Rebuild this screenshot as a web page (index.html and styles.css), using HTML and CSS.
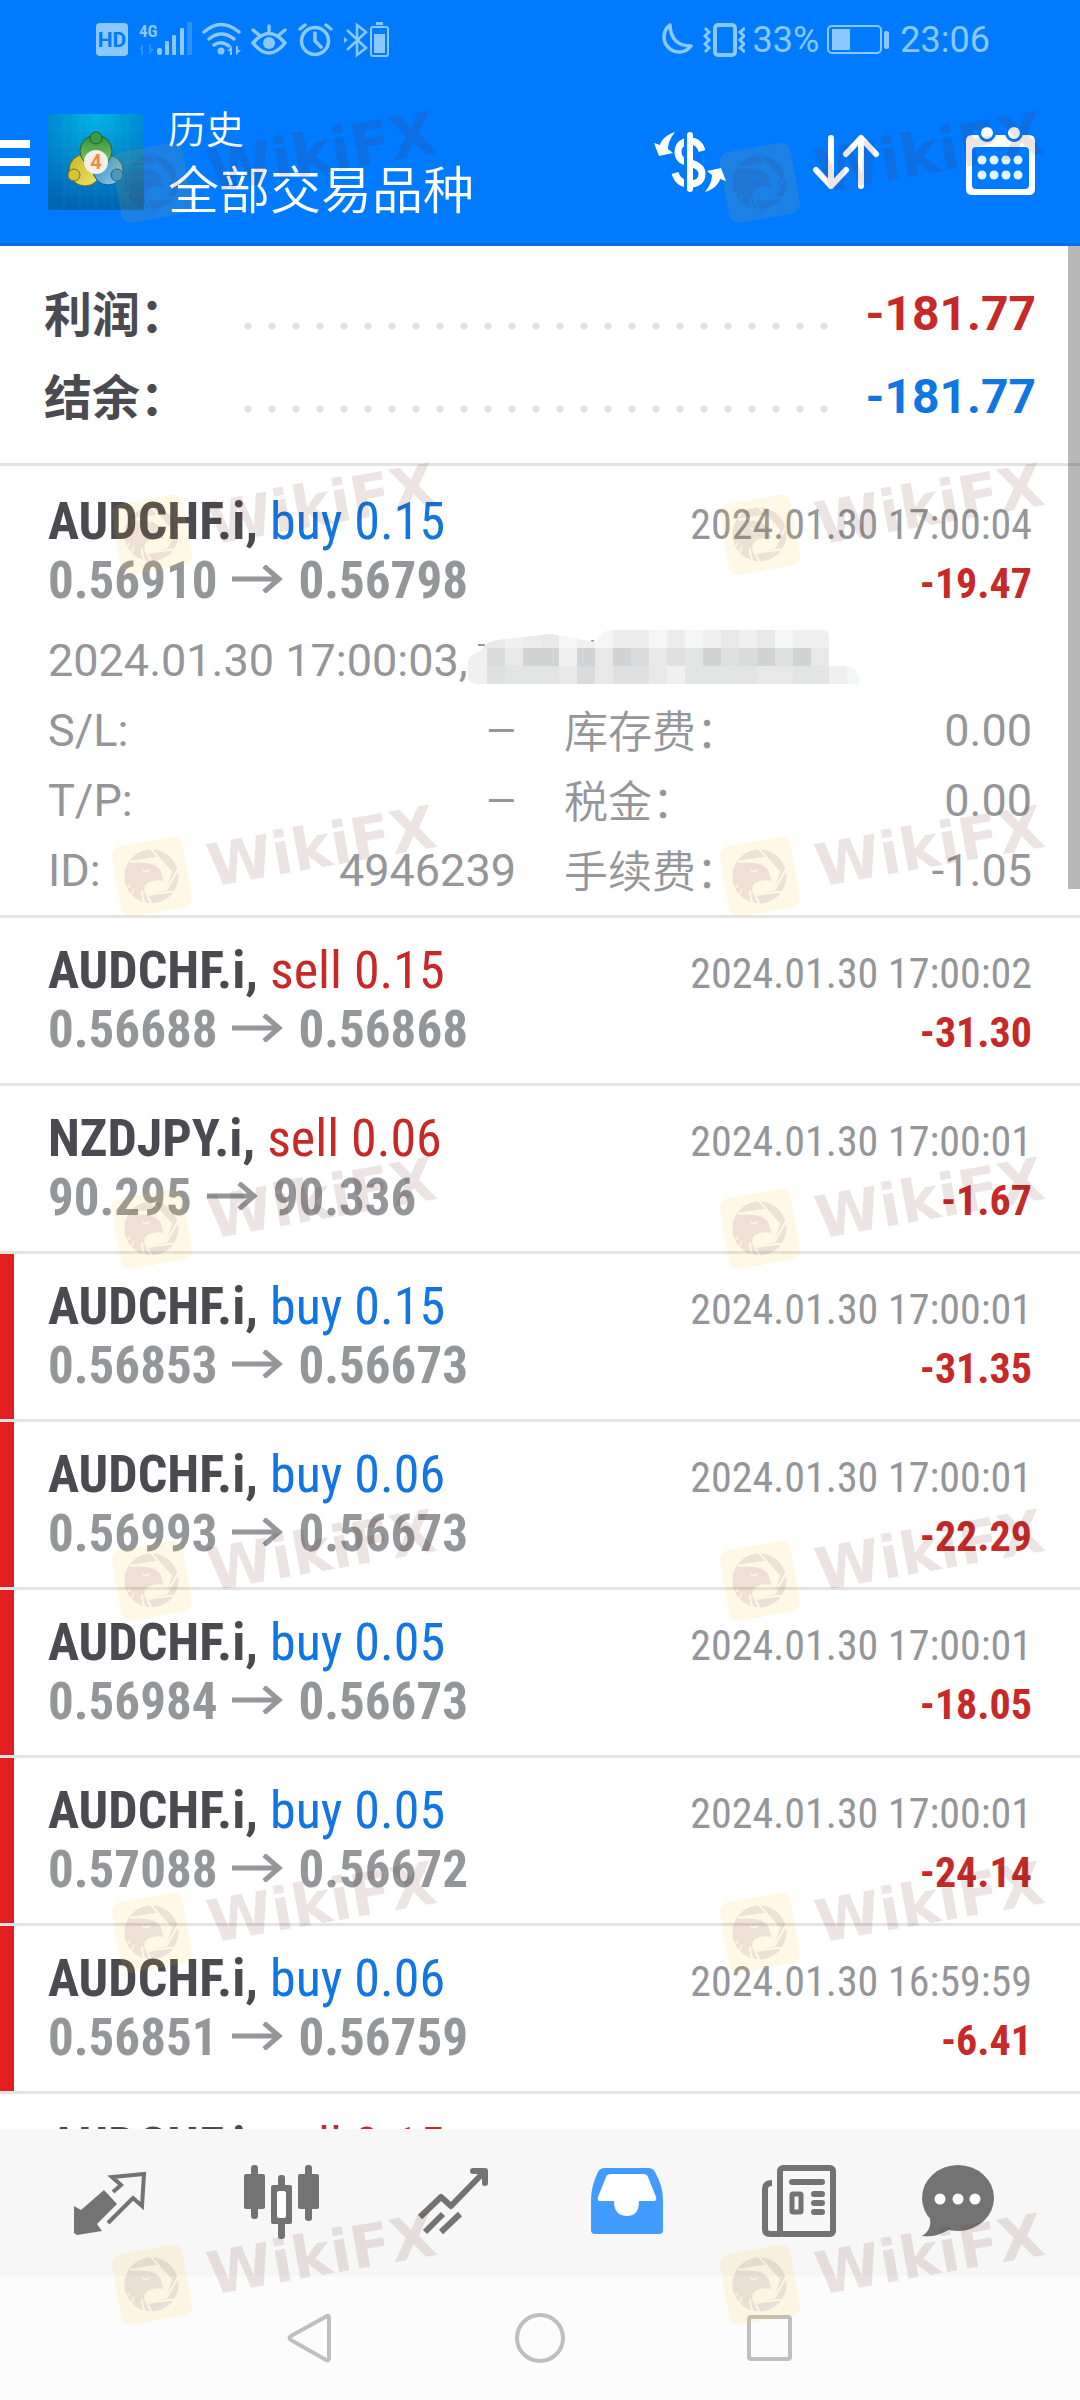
FILE: index.html
```html
<!DOCTYPE html>
<html lang="zh-CN">
<head>
<meta charset="utf-8">
<meta name="viewport" content="width=device-width, initial-scale=1">
<title>历史</title>
<link rel="stylesheet" href="styles.css">
</head>
<body>
<svg class="defs" aria-hidden="true">
  <defs>
    <mask id="eagle-cut" maskUnits="userSpaceOnUse" x="0" y="0" width="72" height="72">
      <rect width="72" height="72" fill="#fff"/>
      <path d="M41 16 56 30 51 49 34 55 29 51Q27 46 32 42 38 38 48 40L46 36Q46 28 38 24 31 21 18 22L15 20 39 17Z" fill="#000"/>
      <path d="M34 7 56 32M64 25 49 52M31 54 64 50M14 21 42 17M29 50 36 64M26 50Q26 57 29 63" fill="none" stroke="#000" stroke-width="2"/>
      <path d="M26 29Q31 32 34 29M14 44 10 50M18 48 15 56" fill="none" stroke="#000" stroke-width="1.5"/>
    </mask>
    <symbol id="eagle" viewBox="0 0 72 72">
      <rect width="72" height="72" rx="10" fill="#fabe10" fill-opacity=".11"/>
      <g transform="rotate(10 36 36)"><circle cx="35.500" cy="35.500" r="27" fill="#581e50" fill-opacity=".1" mask="url(#eagle-cut)"/></g>
    </symbol>
    <symbol id="arrow" viewBox="0 0 51 28"><path d="M0 14H46M32 1 47 14 32 27" fill="none" stroke="currentColor" stroke-width="5"/></symbol>
  </defs>
</svg>

<div class="app">
  <div class="status">
    <div class="status-side">
      <svg width="32" height="40" viewBox="96 20 32 40"><rect x="96" y="23" width="32" height="33" rx="4" fill="currentColor"/><text x="112" y="47" text-anchor="middle" class="hd">HD</text></svg>
      <svg width="54" height="40" viewBox="138 20 54 40"><text x="139" y="37" class="g4">4G</text><g fill="currentColor"><rect x="157" y="48" width="5" height="7" rx="2"/><rect x="165" y="41" width="4" height="14" rx="1"/><rect x="172" y="35" width="4" height="20" rx="1"/><rect x="180" y="28" width="4" height="27" rx="1"/><path opacity=".3" d="M187 22H192V55H187ZM139 49 143 44V55H141V49ZM154 49 149 55V44H151V49Z"/></g></svg>
      <svg width="39" height="40" viewBox="202 20 39 40"><g fill="none" stroke="currentColor" stroke-width="3.500" stroke-linecap="round"><path d="M204 32Q221 17 239 32M209 39Q221 29 234 39M214 45Q221 40 229 46"/></g><circle cx="221" cy="51" r="3.500" fill="currentColor"/><path d="M227 51 232 46V55H230V51ZM241 50 236 55V46H238V50Z" fill="currentColor"/></svg>
      <svg width="36" height="40" viewBox="251 20 36 40"><path d="M253 43Q269 24 285 43 269 63 253 43ZM269 31V26M259 35 253 30M279 35 285 30" fill="none" stroke="currentColor" stroke-width="3.500" stroke-linecap="round"/><circle cx="269" cy="43" r="6" fill="currentColor"/></svg>
      <svg width="36" height="40" viewBox="297 20 36 40"><g fill="none" stroke="currentColor" stroke-width="3.500" stroke-linecap="round"><circle cx="315" cy="41" r="13.500"/><path d="M315 33V41L321 47M300 29 305 25M331 29 326 25"/></g></svg>
      <svg width="46" height="40" viewBox="343 20 46 40"><path d="M347 30 366 48 357 55V25L366 32 347 50" fill="none" stroke="currentColor" stroke-width="2.500"/><path d="M344 37 348 40 344 43Z" fill="currentColor"/><rect x="371" y="27" width="17" height="29" rx="2" fill="none" stroke="currentColor" stroke-width="2"/><path d="M374 34H385V53H374ZM376 22H383V25H376Z" fill="currentColor"/></svg>
    </div>
    <div class="status-side status-text">
      <svg width="36" height="40" viewBox="661 20 36 40"><path d="M672 25A15 15 0 1 0 693 46Q673 46 672 25Z" fill="none" stroke="currentColor" stroke-width="3.500" stroke-linejoin="round"/></svg>
      <svg width="42" height="40" viewBox="705 20 42 40"><rect x="717" y="25" width="20" height="30" rx="3" fill="none" stroke="currentColor" stroke-width="4"/><path d="M707 28 711 32 707 36 711 40 707 44 711 48 707 52M747 28 742 32 746 36 742 40 746 44 742 48 747 52" fill="none" stroke="currentColor" stroke-width="3"/></svg>
      <span>33%</span>
      <svg width="65" height="40" viewBox="829 20 65 40"><rect x="830" y="26" width="53" height="27" rx="4" fill="none" stroke="currentColor" stroke-width="2"/><path d="M834 29H852V50H834Z" fill="currentColor"/><rect x="886" y="31" width="5" height="18" rx="2" fill="currentColor"/></svg>
      <span>23:06</span>
    </div>
  </div>

  <header class="bar">
    <button class="icon-btn menu" aria-label="菜单"><svg width="30" height="48" viewBox="0 0 30 48" fill="#fff"><path d="M0 2H30V10H0ZM0 20H30V28H0ZM0 38H30V46H0Z"/></svg></button>
    <svg class="logo" width="96" height="96" viewBox="0 0 96 96" aria-hidden="true">
      <defs>
        <radialGradient id="lg-bg" cx=".5" cy="0" r="1"><stop offset="0" stop-color="#00b4e8"/><stop offset=".55" stop-color="#0086cd"/><stop offset="1" stop-color="#0064b4"/></radialGradient>
        <linearGradient id="lg-g" x2="0" y2="1"><stop stop-color="#2f8f3c"/><stop offset="1" stop-color="#8fcb6a"/></linearGradient>
        <linearGradient id="lg-y" x2="1" y2="1"><stop stop-color="#c5b92a"/><stop offset="1" stop-color="#f2e26b"/></linearGradient>
        <linearGradient id="lg-b" x2="1" y2="1"><stop stop-color="#2f86bd"/><stop offset="1" stop-color="#8fd0ee"/></linearGradient>
      </defs>
      <rect width="96" height="96" fill="url(#lg-bg)"/>
      <path d="M16 0V96M32 0V96M48 0V96M64 0V96M80 0V96M0 16H96M0 32H96M0 48H96M0 64H96M0 80H96" stroke="#fff" stroke-opacity=".06"/>
      <circle cx="37" cy="56" r="16" fill="url(#lg-y)" stroke="#6f651a"/>
      <circle cx="60" cy="56" r="15" fill="url(#lg-b)" stroke="#1b5a86"/>
      <circle cx="48" cy="37" r="16" fill="url(#lg-g)" stroke="#24632c"/>
      <circle cx="48" cy="24" r="6" fill="#3f9a45" stroke="#1f5c2a"/>
      <circle cx="26" cy="61" r="6" fill="#d6c433" stroke="#7d7018"/>
      <circle cx="69" cy="61" r="6" fill="#3c96cc" stroke="#1b5a86"/>
      <circle cx="48" cy="48" r="12" fill="#f1efe8"/>
      <text x="48" y="55" text-anchor="middle" class="logo-num">4</text>
    </svg>
    <h1 class="titles"><span class="title-small">历史</span><span class="title-main">全部交易品种</span></h1>
    <div class="actions">
      <button class="icon-btn" aria-label="货币"><svg width="72" height="72" viewBox="654 126 72 72"><path d="M702 151C700 144 696 141 690 141 682 141 678 146 678 152 678 160 684 162 690 163 698 165 702 168 702 174 702 181 697 184 690 184 682 184 677 180 675 173" fill="none" stroke="#fff" stroke-width="7"/><path d="M686 130V194" stroke="#007aff" stroke-width="4"/><path d="M690 135V189" stroke="#fff" stroke-width="6" stroke-linecap="round"/><path d="M675 132C667 134 661 140 660 145L654 143 659 156 673 153 668 149C668 143 671 137 675 132ZM705 192C713 190 719 184 720 179L726 181 721 168 707 171 712 175C712 181 709 187 705 192Z" fill="#fff"/></svg></button>
      <button class="icon-btn" aria-label="排序"><svg width="72" height="72" viewBox="810 126 72 72"><path d="M831 138V186M816 170 831 186 846 170M861 186V138M846 154 861 138 876 154" fill="none" stroke="#fff" stroke-width="6" stroke-linecap="round" stroke-linejoin="round"/></svg></button>
      <button class="icon-btn" aria-label="日历"><svg width="72" height="72" viewBox="966 126 72 72"><path fill="#fff" fill-rule="evenodd" d="M972 135H1029Q1035 135 1035 141V189Q1035 195 1029 195H972Q966 195 966 189V141Q966 135 972 135ZM976 147Q972 147 972 151V185Q972 189 976 189H1025Q1029 189 1029 185V151Q1029 147 1025 147Z"/><g fill="#fff" stroke="#007aff" stroke-width="3"><circle cx="987" cy="133" r="7.500"/><circle cx="1014" cy="133" r="7.500"/></g><g fill="#e2f4ff"><circle cx="982" cy="160" r="4.500"/><circle cx="994" cy="160" r="4.500"/><circle cx="1006" cy="160" r="4.500"/><circle cx="1018" cy="160" r="4.500"/><circle cx="982" cy="175" r="4.500"/><circle cx="994" cy="175" r="4.500"/><circle cx="1006" cy="175" r="4.500"/><circle cx="1018" cy="175" r="4.500"/></g></svg></button>
    </div>
  </header>

  <main class="history">
    <section class="summary">
      <div class="sum-row"><span class="sum-label">利润：</span><span class="dots"></span><strong class="sum-value loss">-181.77</strong></div>
      <div class="sum-row"><span class="sum-label">结余：</span><span class="dots"></span><strong class="sum-value buy">-181.77</strong></div>
    </section>

    <article class="deal open">
      <div class="line"><h2 class="name">AUDCHF.i, <span class="buy">buy 0.15</span></h2><time class="time">2024.01.30 17:00:04</time></div>
      <div class="line"><div class="prices">0.56910<svg class="arrow"><use href="#arrow"/></svg>0.56798</div><span class="profit">-19.47</span></div>
      <div class="details">
        <div class="opened"><span>2024.01.30 17:00:03,</span>
          <svg width="394" height="70" viewBox="467 626 394 70" aria-hidden="true">
            <clipPath id="blot"><path d="M464 668Q466 655 478 652L486 643 497 640 550 634 595 642Q600 630 612 630H822Q828 630 828 637V666H844Q858 668 858 684H475Q464 682 464 668Z"/></clipPath>
            <path d="M477 645H484M590 641H593" stroke="#95969a" stroke-width="2"/>
            <g clip-path="url(#blot)">
              <path d="M464 630H858V684H464Z" fill="#f0f0f0"/>
              <g fill="#e8e8e8"><path d="M486 630h18v18h-18zM540 630h18v18h-18zM720 630h18v18h-18zM756 630h18v18h-18zM504 648h18v18h-18zM648 648h18v18h-18zM810 648h18v18h-18zM558 666h18v18h-18zM594 666h18v18h-18zM648 666h18v18h-18zM756 666h36v18h-36zM594 648h18v18h-18z"/></g>
              <g fill="#f5f6f6"><path d="M558 630h18v18h-18zM594 630h18v18h-18zM648 630h18v18h-18zM684 630h18v18h-18zM774 630h18v18h-18zM846 666h18v18h-18z"/></g>
              <g fill="#ececec"><path d="M522 630h18v18h-18zM612 630h36v18h-36zM666 630h18v18h-18z"/></g>
              <g fill="#dadbdd"><path d="M486 648h18v18h-18zM630 648h18v18h-18zM738 648h18v18h-18zM576 666h18v18h-18z"/></g>
              <g fill="#d2d3d5"><path d="M522 648h36v18h-36zM576 648h18v18h-18zM612 648h18v18h-18zM702 648h18v18h-18zM756 648h18v18h-18zM792 648h18v18h-18z"/></g>
              <g fill="#dfe0e2"><path d="M666 648h18v18h-18zM720 648h18v18h-18zM774 648h18v18h-18zM486 666h18v18h-18zM612 666h36v18h-36z"/></g>
              <g fill="#e3e4e4"><path d="M684 648h18v18h-18zM504 666h54v18h-54zM684 666h72v18h-72zM792 666h36v18h-36z"/></g>
            </g>
          </svg>
        </div>
        <dl class="grid">
          <div class="cell"><dt>S/L:</dt><dd class="none">—</dd></div><div class="cell"><dt class="cjk">库存费：</dt><dd>0.00</dd></div>
          <div class="cell"><dt>T/P:</dt><dd class="none">—</dd></div><div class="cell"><dt class="cjk">税金：</dt><dd>0.00</dd></div>
          <div class="cell"><dt>ID:</dt><dd>4946239</dd></div><div class="cell"><dt class="cjk">手续费：</dt><dd>-1.05</dd></div>
        </dl>
      </div>
    </article>

    <article class="deal">
      <div class="line"><h2 class="name">AUDCHF.i, <span class="loss">sell 0.15</span></h2><time class="time">2024.01.30 17:00:02</time></div>
      <div class="line"><div class="prices">0.56688<svg class="arrow"><use href="#arrow"/></svg>0.56868</div><span class="profit">-31.30</span></div>
    </article>
    <article class="deal">
      <div class="line"><h2 class="name">NZDJPY.i, <span class="loss">sell 0.06</span></h2><time class="time">2024.01.30 17:00:01</time></div>
      <div class="line"><div class="prices">90.295<svg class="arrow"><use href="#arrow"/></svg>90.336</div><span class="profit">-1.67</span></div>
    </article>
    <article class="deal stop">
      <div class="line"><h2 class="name">AUDCHF.i, <span class="buy">buy 0.15</span></h2><time class="time">2024.01.30 17:00:01</time></div>
      <div class="line"><div class="prices">0.56853<svg class="arrow"><use href="#arrow"/></svg>0.56673</div><span class="profit">-31.35</span></div>
    </article>
    <article class="deal stop">
      <div class="line"><h2 class="name">AUDCHF.i, <span class="buy">buy 0.06</span></h2><time class="time">2024.01.30 17:00:01</time></div>
      <div class="line"><div class="prices">0.56993<svg class="arrow"><use href="#arrow"/></svg>0.56673</div><span class="profit">-22.29</span></div>
    </article>
    <article class="deal stop">
      <div class="line"><h2 class="name">AUDCHF.i, <span class="buy">buy 0.05</span></h2><time class="time">2024.01.30 17:00:01</time></div>
      <div class="line"><div class="prices">0.56984<svg class="arrow"><use href="#arrow"/></svg>0.56673</div><span class="profit">-18.05</span></div>
    </article>
    <article class="deal stop">
      <div class="line"><h2 class="name">AUDCHF.i, <span class="buy">buy 0.05</span></h2><time class="time">2024.01.30 17:00:01</time></div>
      <div class="line"><div class="prices">0.57088<svg class="arrow"><use href="#arrow"/></svg>0.56672</div><span class="profit">-24.14</span></div>
    </article>
    <article class="deal stop">
      <div class="line"><h2 class="name">AUDCHF.i, <span class="buy">buy 0.06</span></h2><time class="time">2024.01.30 16:59:59</time></div>
      <div class="line"><div class="prices">0.56851<svg class="arrow"><use href="#arrow"/></svg>0.56759</div><span class="profit">-6.41</span></div>
    </article>
    <article class="deal">
      <div class="line"><h2 class="name">AUDCHF.i, <span class="loss">sell 0.15</span></h2></div>
    </article>
    <div class="scrollbar"></div>
  </main>

  <nav class="tabs">
    <button class="icon-btn" aria-label="行情"><svg width="80" height="80" viewBox="70 2162 80 80"><path d="M104 2189 117 2203 97 2223 102 2230 77 2234 74 2232V2205L81 2209Z" fill="currentColor"/><path d="M113 2191 121 2184 112 2176 144 2173 142 2205 133 2197 108 2222" fill="none" stroke="currentColor" stroke-width="4"/></svg></button>
    <button class="icon-btn" aria-label="图表"><svg width="80" height="80" viewBox="242 2163 80 80"><g fill="currentColor"><rect x="244" y="2174" width="21" height="35" rx="2"/><rect x="251" y="2165" width="7" height="54" rx="3"/><rect x="271" y="2185" width="21" height="39" rx="2"/><rect x="278" y="2175" width="7" height="64" rx="3"/><rect x="298" y="2174" width="21" height="35" rx="2"/><rect x="305" y="2165" width="7" height="56" rx="3"/></g><rect x="277" y="2191" width="9" height="27" rx="2" fill="#fff"/></svg></button>
    <button class="icon-btn" aria-label="交易"><svg width="80" height="80" viewBox="415 2163 80 80"><g fill="none" stroke="currentColor" stroke-width="6"><path d="M421 2217 442 2197 452 2206 485 2172M426 2232 444 2214M442 2232 461 2214" stroke-linejoin="round"/><path d="M474 2171H486V2183" stroke-linecap="round" stroke-linejoin="round"/></g></svg></button>
    <button class="icon-btn current" aria-label="历史" aria-current="page"><svg width="80" height="80" viewBox="586 2163 80 80"><path fill="#fff" d="M608 2172H647L658 2203H640V2218H612V2203H596Z"/><path fill="currentColor" fill-rule="evenodd" d="M605 2168H648Q653 2168 655 2172 663 2186 663 2200V2230Q663 2234 659 2234H595Q591 2234 591 2230V2200Q591 2186 598 2172 600 2168 605 2168ZM611 2174Q607 2174 606 2177L598 2197Q597 2201 600 2201H614Q614 2216 627 2216 639 2216 639 2201H654Q657 2201 656 2197L648 2177Q647 2174 643 2174Z"/></svg></button>
    <button class="icon-btn" aria-label="新闻"><svg width="80" height="80" viewBox="759 2163 80 80"><g fill="none" stroke="currentColor" stroke-width="6"><rect x="781" y="2168" width="53" height="66" rx="3"/><path d="M773 2183Q766 2183 766 2189V2229Q766 2234 771 2234H782"/><path d="M793 2182H823M815 2194H823M815 2203H823M815 2212H823" stroke-linecap="round"/><rect x="793" y="2194" width="9" height="18" rx="1" stroke-width="5"/></g></svg></button>
    <button class="icon-btn" aria-label="消息"><svg width="80" height="80" viewBox="918 2163 80 80"><path d="M930 2218Q932 2230 922 2236 936 2238 950 2229Z" fill="currentColor"/><ellipse cx="958" cy="2198" rx="36" ry="33" fill="currentColor"/><g fill="#fff"><circle cx="940" cy="2199" r="5.500"/><circle cx="958" cy="2199" r="5.500"/><circle cx="975" cy="2199" r="5.500"/></g></svg></button>
  </nav>

  <div class="system">
    <button class="icon-btn" aria-label="返回"><svg width="50" height="50" viewBox="0 0 50 50"><path d="M42 3Q44 2 44 5V45Q44 48 41 47L6 27Q3 25 6 23Z" fill="none" stroke="currentColor" stroke-width="4"/></svg></button>
    <button class="icon-btn" aria-label="主屏幕"><svg width="50" height="50" viewBox="0 0 50 50"><circle cx="25" cy="25" r="23" fill="none" stroke="currentColor" stroke-width="4"/></svg></button>
    <button class="icon-btn" aria-label="最近任务"><svg width="50" height="50" viewBox="0 0 50 50"><rect x="4" y="4" width="41" height="42" rx="2" fill="none" stroke="currentColor" stroke-width="4"/></svg></button>
  </div>

  <div class="marks" aria-hidden="true">
    <div class="mark-row"><div class="mark"><svg class="eagle"><use href="#eagle"/></svg>WikiFX</div><div class="mark"><svg class="eagle"><use href="#eagle"/></svg>WikiFX</div></div>
    <div class="mark-row"><div class="mark"><svg class="eagle"><use href="#eagle"/></svg>WikiFX</div><div class="mark"><svg class="eagle"><use href="#eagle"/></svg>WikiFX</div></div>
    <div class="mark-row tight"><div class="mark"><svg class="eagle"><use href="#eagle"/></svg>WikiFX</div><div class="mark"><svg class="eagle"><use href="#eagle"/></svg>WikiFX</div></div>
    <div class="mark-row"><div class="mark"><svg class="eagle"><use href="#eagle"/></svg>WikiFX</div><div class="mark"><svg class="eagle"><use href="#eagle"/></svg>WikiFX</div></div>
    <div class="mark-row"><div class="mark"><svg class="eagle"><use href="#eagle"/></svg>WikiFX</div><div class="mark"><svg class="eagle"><use href="#eagle"/></svg>WikiFX</div></div>
    <div class="mark-row"><div class="mark"><svg class="eagle"><use href="#eagle"/></svg>WikiFX</div><div class="mark"><svg class="eagle"><use href="#eagle"/></svg>WikiFX</div></div>
    <div class="mark-row"><div class="mark"><svg class="eagle"><use href="#eagle"/></svg>WikiFX</div><div class="mark"><svg class="eagle"><use href="#eagle"/></svg>WikiFX</div></div>
  </div>
</div>
</body>
</html>
```
FILE: styles.css
```css
* { box-sizing: border-box; }

body {
  margin: 0;
  background: #fff;
  font-family: Roboto, "Noto Sans CJK SC", sans-serif;
}

h1, h2, dl, dd { margin: 0; font-weight: 400; }
svg { display: block; flex: none; }
.defs { position: absolute; width: 0; height: 0; }

.icon-btn {
  display: flex;
  align-items: center;
  justify-content: center;
  padding: 0;
  border: 0;
  background: none;
  color: inherit;
}

.app {
  position: relative;
  display: flex;
  flex-direction: column;
  height: 100vh;
  overflow: hidden;
}

/* Status bar */
.status {
  display: flex;
  flex: none;
  justify-content: space-between;
  height: 80px;
  padding: 0 90px 0 96px;
  background: #007aff;
  color: #8cc8ff;
}
.status-side { display: flex; align-items: center; gap: 10px; }
.status-text { gap: 8px; font-size: 36px; line-height: 40px; }
.hd { font: 700 21px Roboto, sans-serif; fill: #007aff; }
.g4 { font: 700 17px "Roboto Condensed", Roboto, sans-serif; fill: currentColor; }

/* App bar */
.bar {
  display: flex;
  flex: none;
  align-items: center;
  height: 166px;
  padding-right: 42px;
  border-bottom: 3px solid #0c6cdc;
  background: #007aff;
  color: #fff;
}
.logo { margin: 0 24px 0 18px; }
.logo-num { font: 700 20px Roboto, sans-serif; fill: #f08a3c; }
.titles {
  display: flex;
  flex: 1;
  flex-direction: column;
  padding-bottom: 4px;
  font-family: "Noto Sans CJK SC", sans-serif;
  font-weight: 350;
}
.title-small { font-size: 38px; line-height: 54px; }
.title-main { font-size: 51px; line-height: 66px; }
.actions { display: flex; gap: 84px; }

/* History list */
.history { position: relative; flex: 1; min-height: 0; overflow: hidden; background: #fff; }
.summary { padding: 26px 44px 25px; border-bottom: 3px solid #e3e3e3; }
.sum-row { display: flex; align-items: center; height: 83px; }
.sum-label { width: 192px; padding-bottom: 5px; color: #4b4a51; font: 700 48px/78px "Noto Sans CJK SC", sans-serif; }
.dots {
  flex: 1;
  height: 12px;
  margin-top: 24px;
  background: radial-gradient(circle at 12px 6px, #e2e2e2 3px, transparent 4px) 0 0 / 24px 12px;
}
.sum-value { width: 200px; text-align: right; font-size: 48px; }

.buy { color: #1176e2; }
.loss { color: #c72828; }

.deal { padding: 23px 48px 24px; border-bottom: 3px solid #e3e3e3; font-family: "Roboto Condensed", Roboto, sans-serif; }
.deal.open { padding: 26px 48px 9px; }
.deal.stop { box-shadow: inset 14px 0 #e21e1e; }
.line { display: flex; align-items: baseline; justify-content: space-between; height: 59px; }
.name { color: #4b4a51; font-size: 52px; font-weight: 700; line-height: 59px; }
.name span { font-weight: 400; }
.prices { color: #95969a; font-size: 51px; font-weight: 700; line-height: 59px; }
.arrow { display: inline-block; width: 51px; height: 28px; margin: 0 15px; vertical-align: 5px; }
.time { color: #95969a; font-size: 42px; line-height: 50px; }
.profit { color: #c72828; font-size: 42px; font-weight: 700; line-height: 50px; }

.details { margin-top: 16px; color: #95969a; font: 45px/70px Roboto, sans-serif; }
.opened { display: flex; height: 70px; }
.grid { display: grid; grid-template-columns: 1fr 1fr; column-gap: 48px; }
.cell { display: flex; justify-content: space-between; height: 70px; }
.cjk { font: 350 44px/66px "Noto Sans CJK SC", sans-serif; }
.none { font-size: 38px; }

.scrollbar { position: absolute; top: 0; right: 0; width: 12px; height: 643px; background: rgba(0, 0, 0, .28); }

/* Bottom bars */
.tabs {
  display: grid;
  flex: none;
  grid-template-columns: repeat(5, 172fr) 148fr;
  height: 147px;
  padding: 0 48px 0 24px;
  background: #f7f7f7;
  color: #737373;
}
.current { color: #429bff; }
.system {
  display: flex;
  flex: none;
  align-items: center;
  justify-content: center;
  gap: 180px;
  height: 124px;
  background: #fcfcfc;
  color: #bfbfbf;
}

/* Watermark layer */
.marks {
  position: absolute;
  inset: 0;
  display: flex;
  flex-direction: column;
  gap: 280px;
  padding: 125px 34px 0 114px;
  overflow: hidden;
  pointer-events: none;
}
.mark-row { display: flex; flex: none; justify-content: space-between; height: 72px; }
.mark-row.tight { margin-top: -10px; }
.mark {
  display: flex;
  align-items: center;
  gap: 21px;
  transform: rotate(-10deg);
  color: rgba(88, 30, 22, .12);
  font: 700 59px/68px "DejaVu Sans", sans-serif;
}
.eagle { width: 72px; height: 72px; }
```
